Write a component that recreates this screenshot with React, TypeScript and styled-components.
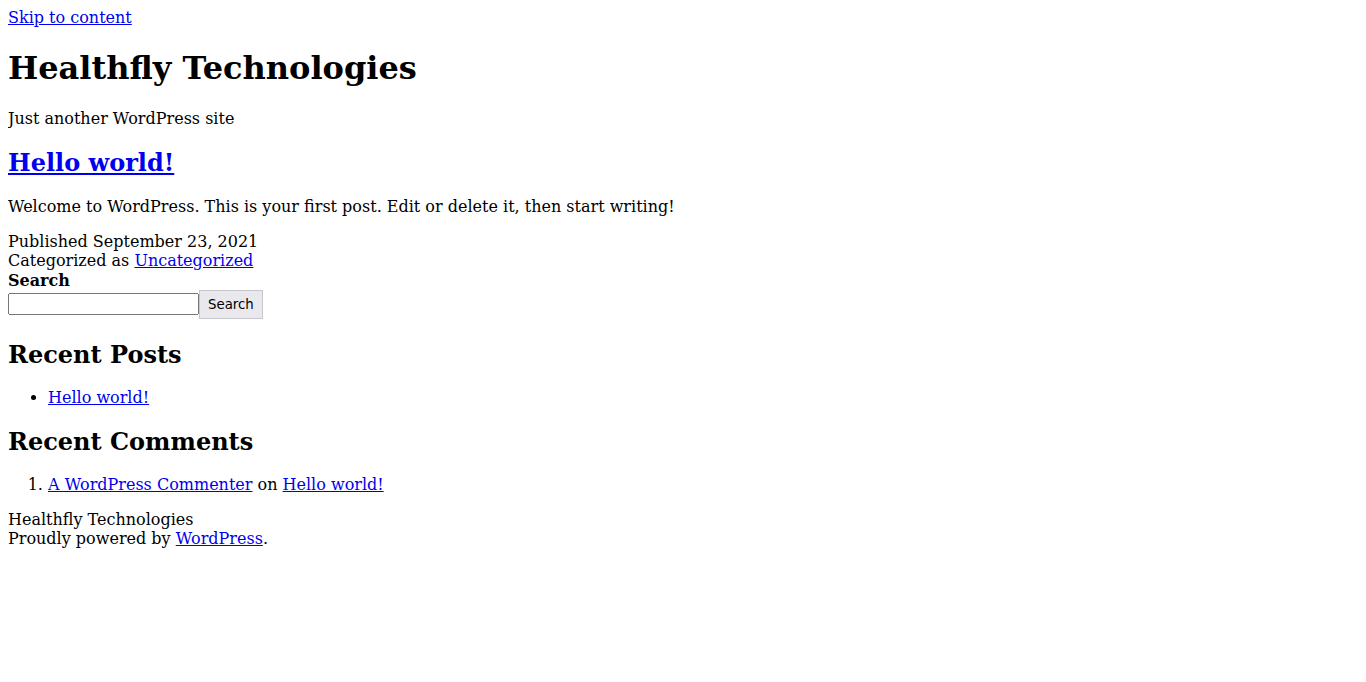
import React from "react";
import styled, { createGlobalStyle } from "styled-components";

const GlobalStyle = createGlobalStyle`
  body {
    margin: 8px;
    font-family: "DejaVu Serif", serif;
    color: #000;
    background: #fff;
  }
  a {
    color: #0000ee;
  }
`;

const SkipLink = styled.a``;

const SiteTitle = styled.h1`
  font-size: 2em;
  margin: 22px 0 21.94px;
`;

const SiteDescription = styled.p`
  margin: 1em 0;
`;

const EntryTitle = styled.h2`
  font-size: 1.5em;
  margin: 0.83em 0;
`;

const EntryContent = styled.p`
  margin: 1em 0;
`;

const MetaLine = styled.div``;

const SearchForm = styled.form`
  margin: 1px 0 0;
  padding-bottom: 1px;
`;

const SearchLabel = styled.label`
  display: block;
  font-weight: bold;
`;

const SearchRow = styled.div`
  display: flex;
  align-items: center;
`;

const SearchInput = styled.input`
  box-sizing: border-box;
  width: 191px;
  height: 22px;
  margin: 0;
`;

const SearchButton = styled.button`
  font-family: "DejaVu Sans", sans-serif;
  font-size: 13.333px;
  height: 29px;
  padding: 1px 8px;
  background: #e9e9ed;
  border: 1px solid #c6c6cc;
  border-radius: 0;
  margin: 0;
`;

const WidgetTitle = styled.h2`
  font-size: 1.5em;
  margin: 0.83em 0 18.9px;
`;

const BulletList = styled.ul`
  margin: 1em 0 20px;
  padding-left: 40px;
`;

const NumberList = styled.ol`
  margin: 19.5px 0 16px;
  padding-left: 40px;
`;

const FooterLine = styled.div``;

export default function App() {
  return (
    <>
      <GlobalStyle />
      <SkipLink href="#content">Skip to content</SkipLink>
      <header>
        <SiteTitle>Healthfly Technologies</SiteTitle>
        <SiteDescription>Just another WordPress site</SiteDescription>
      </header>
      <main id="content">
        <article>
          <EntryTitle>
            <a href="#">Hello world!</a>
          </EntryTitle>
          <EntryContent>
            Welcome to WordPress. This is your first post. Edit or delete it,
            then start writing!
          </EntryContent>
          <footer>
            <MetaLine>Published September 23, 2021</MetaLine>
            <MetaLine>
              Categorized as <a href="#">Uncategorized</a>
            </MetaLine>
          </footer>
        </article>
      </main>
      <aside>
        <SearchForm onSubmit={(e) => e.preventDefault()}>
          <SearchLabel htmlFor="s">Search</SearchLabel>
          <SearchRow>
            <SearchInput id="s" type="search" />
            <SearchButton type="submit">Search</SearchButton>
          </SearchRow>
        </SearchForm>
        <WidgetTitle>Recent Posts</WidgetTitle>
        <BulletList>
          <li>
            <a href="#">Hello world!</a>
          </li>
        </BulletList>
        <WidgetTitle>Recent Comments</WidgetTitle>
        <NumberList>
          <li>
            <a href="#">A WordPress Commenter</a> on{" "}
            <a href="#">Hello world!</a>
          </li>
        </NumberList>
      </aside>
      <footer>
        <FooterLine>Healthfly Technologies</FooterLine>
        <FooterLine>
          Proudly powered by <a href="#">WordPress</a>.
        </FooterLine>
      </footer>
    </>
  );
}
